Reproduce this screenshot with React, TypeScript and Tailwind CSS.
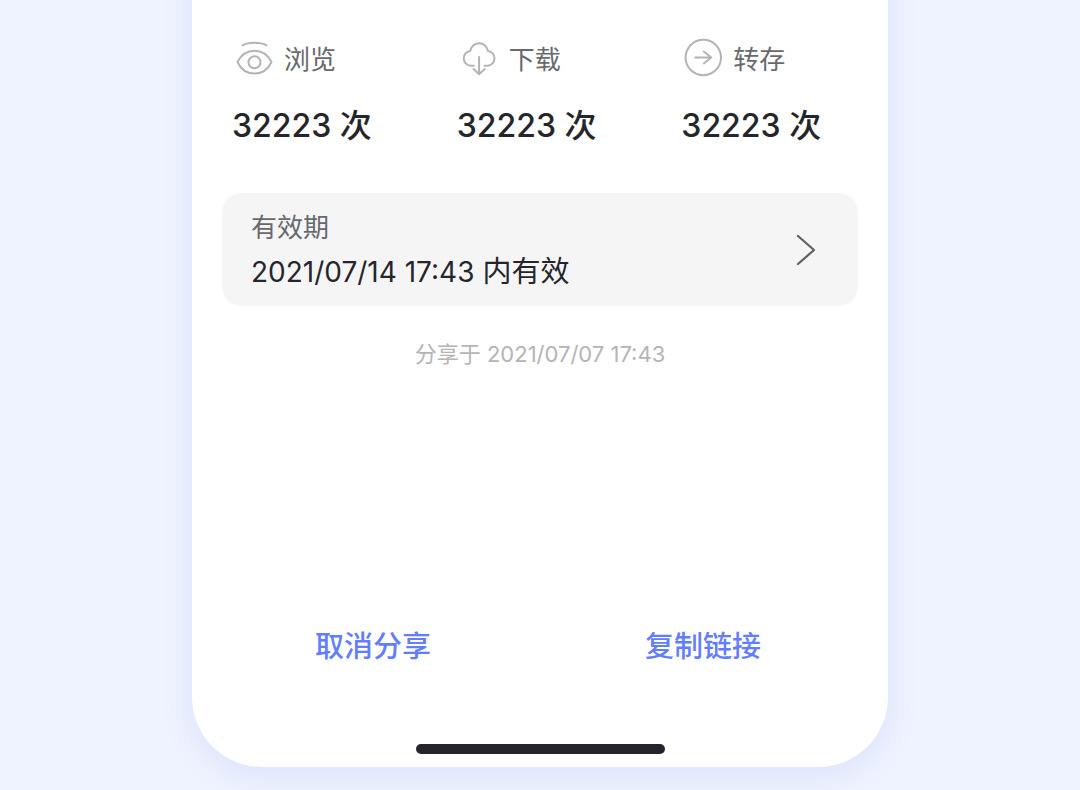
import type { ReactNode } from "react";

type Stat = { label: string; value: string; icon: ReactNode };

function EyeIcon() {
  return (
    <svg className="size-10 shrink-0" viewBox="0 0 40 40" fill="none" stroke="#b4b4b6" strokeWidth="2" strokeLinecap="round" strokeLinejoin="round" aria-hidden="true">
      <path d="M8.500 7.300C14.500 4 26.500 4 32.500 7.300" />
      <path d="M3.500 24C7 17 13 12.800 20.500 12.800S34 17 37.500 24C34 31.500 28 35.500 20.500 35.500S7 31.500 3.500 24Z" />
      <circle cx="20.500" cy="24.300" r="6" />
    </svg>
  );
}

function CloudIcon() {
  return (
    <svg className="size-10 shrink-0" viewBox="0 0 40 40" fill="none" stroke="#b4b4b6" strokeWidth="2" strokeLinecap="round" strokeLinejoin="round" aria-hidden="true">
      <path d="M14.800 27.800H11.500A7.500 7.500 0 0 1 11.200 12.900A9 9 0 0 1 29 12.900A7.500 7.500 0 0 1 28.700 27.800H25.600" />
      <path d="M20.100 19V36M14.500 31L20.100 36.200L25.700 31" />
    </svg>
  );
}

function TransferIcon() {
  return (
    <svg className="size-10 shrink-0" viewBox="0 0 40 40" fill="none" stroke="#b4b4b6" strokeWidth="2" strokeLinecap="round" strokeLinejoin="round" aria-hidden="true">
      <circle cx="20.300" cy="19.500" r="17.700" />
      <path d="M12.300 19.500H28.300M20.800 13.500L28.300 19.500L20.800 25.500" />
    </svg>
  );
}

const stats: Stat[] = [
  { label: "浏览", value: "32223 次", icon: <EyeIcon /> },
  { label: "下载", value: "32223 次", icon: <CloudIcon /> },
  { label: "转存", value: "32223 次", icon: <TransferIcon /> },
];

export default function App() {
  return (
    <div className="flex min-h-screen justify-center overflow-hidden bg-[#eff3ff] pb-[23px] font-['Inter','Noto_Sans_CJK_SC',sans-serif] text-[#25262b]">
      <main className="-mt-20 flex w-full max-w-[696px] flex-col rounded-b-[70px] bg-white px-[30px] pt-[118px] shadow-[0_8px_32px_rgba(82,116,225,0.13)]">
        <dl className="grid grid-cols-3 gap-[58px] px-[10px]">
          {stats.map((stat) => (
            <div key={stat.label}>
              <dt className="flex h-10 items-center gap-[10px] pl-[2px] text-[26px] whitespace-nowrap text-[#68696d]">
                {stat.icon}
                <span className="pt-1 leading-10">{stat.label}</span>
              </dt>
              <dd className="mt-6 text-[32px] leading-12 font-medium whitespace-nowrap">{stat.value}</dd>
            </div>
          ))}
        </dl>

        <button type="button" className="mt-[43px] flex items-center justify-between rounded-[20px] bg-[#f5f5f6] pt-[13px] pb-3 pr-10 pl-[29px] text-left">
          <span className="flex flex-col">
            <span className="text-[26px] leading-11 text-[#68696d]">有效期</span>
            <span className="text-[29px] leading-11">
              <time className="text-[28px]" dateTime="2021-07-14T17:43">2021/07/14 17:43</time> 内有效
            </span>
          </span>
          <svg className="h-8 w-6" viewBox="0 0 24 32" fill="none" stroke="#5f6064" strokeWidth="2.200" strokeLinecap="round" strokeLinejoin="round" aria-hidden="true">
            <path d="M4 2L20 16L4 30" />
          </svg>
        </button>

        <p className="mt-8 text-center text-[22px] leading-8 text-[#b4b4b6]">分享于 2021/07/07 17:43</p>

        <div className="mt-auto mb-[73px] grid grid-cols-2 text-[29px] leading-12 font-medium text-[#637dff]">
          <button type="button" className="pr-4">取消分享</button>
          <button type="button" className="pl-2">复制链接</button>
        </div>
        <div className="mx-auto mb-[13px] h-[10px] w-[249px] rounded-full bg-[#25262b]" />
      </main>
    </div>
  );
}
